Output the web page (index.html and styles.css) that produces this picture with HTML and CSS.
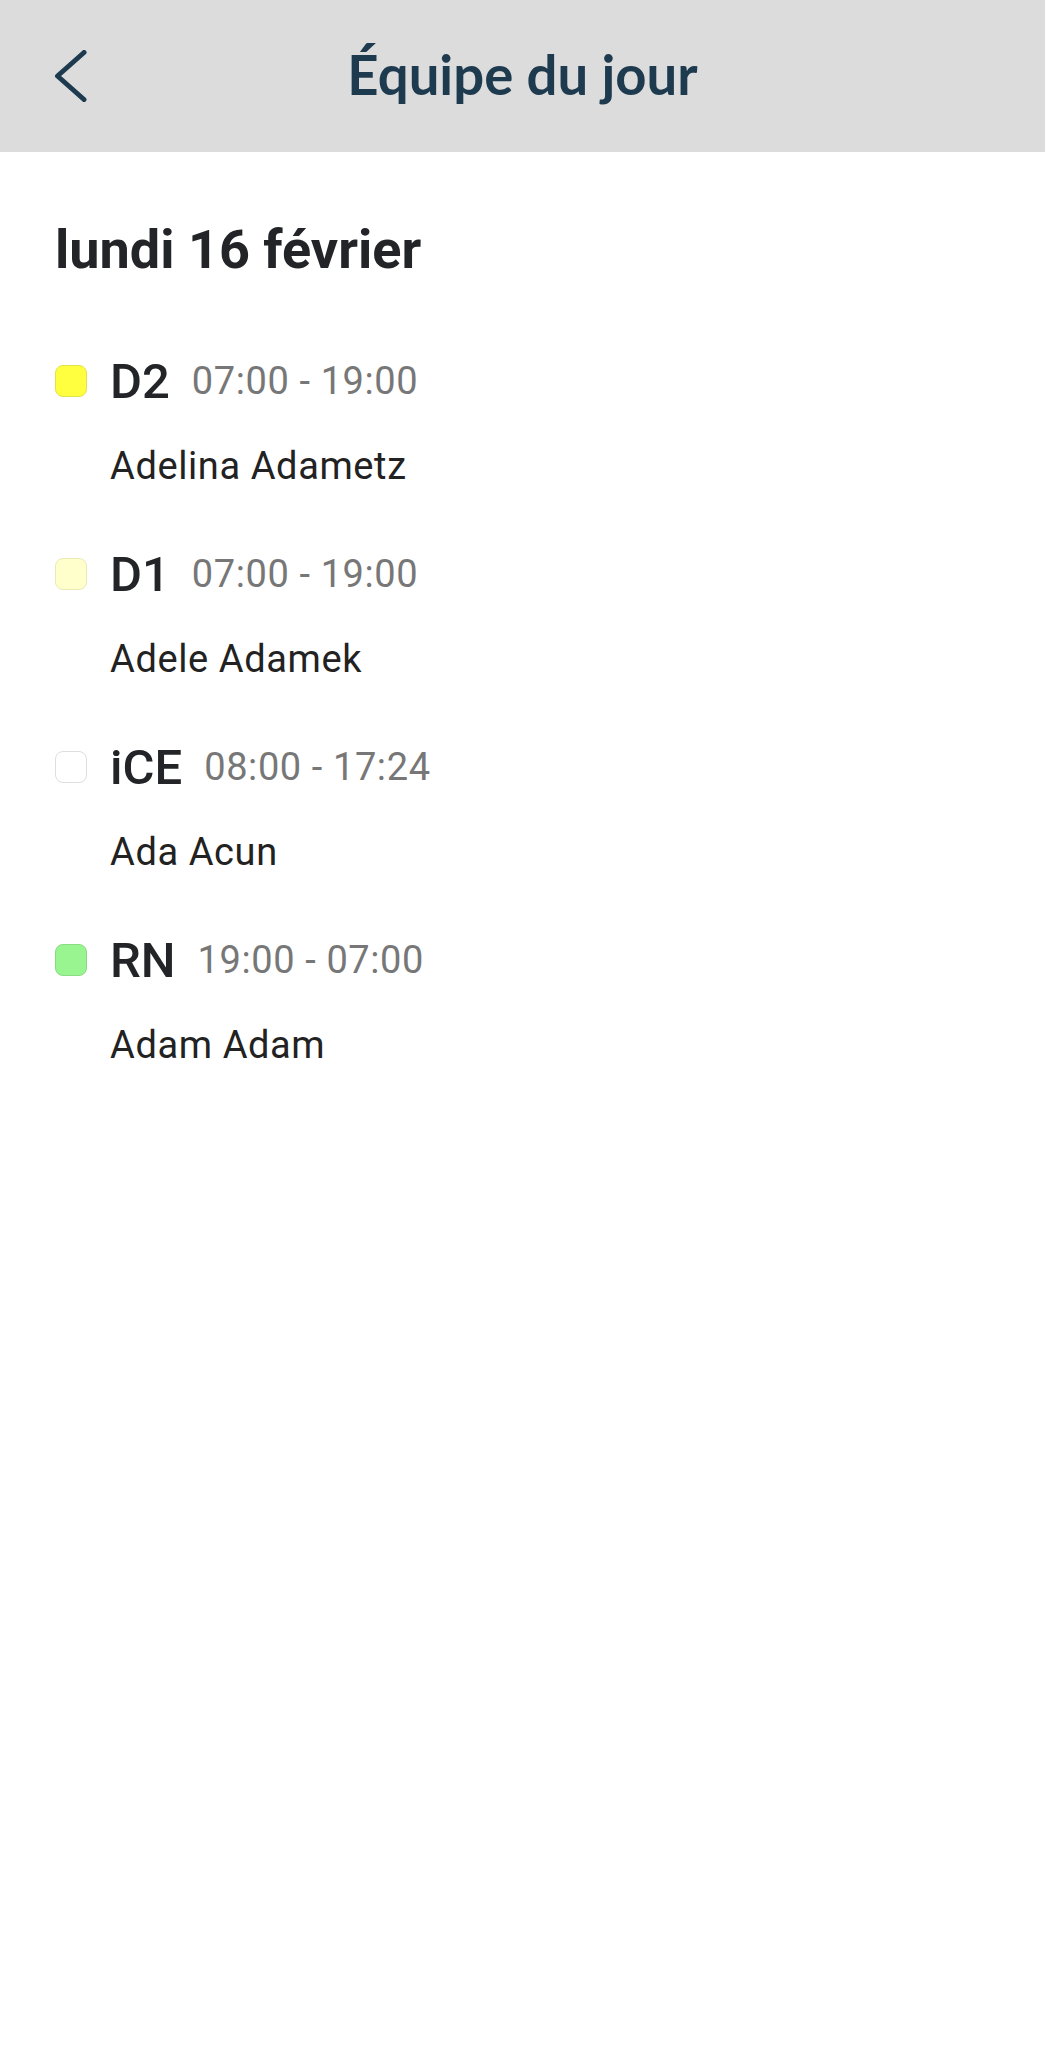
FILE: index.html
```html
<!DOCTYPE html>
<html lang="fr">
<head>
    <meta charset="UTF-8">
    <title>Équipe du jour</title>
    <link rel="stylesheet" href="styles.css">
</head>
<body>
    <header class="topbar">
        <a class="back" href="#" aria-label="Retour">
            <svg width="34" height="52" viewBox="0 0 34 52">
                <path d="M31 2.5 L4.5 26 L31 49.5" fill="none" stroke="#1e3a4f" stroke-width="5" stroke-linecap="round" stroke-linejoin="round"/>
            </svg>
        </a>
        <h1>Équipe du jour</h1>
        <span></span>
    </header>

    <main class="container">
        <h2 class="day">lundi 16 février</h2>

        <ul class="shifts">
            <li class="shift">
                <div class="shift-head">
                    <span class="dot dot-d2"></span>
                    <span class="code">D2</span>
                    <span class="hours">07:00 - 19:00</span>
                </div>
                <div class="name">Adelina Adametz</div>
            </li>
            <li class="shift">
                <div class="shift-head">
                    <span class="dot dot-d1"></span>
                    <span class="code">D1</span>
                    <span class="hours">07:00 - 19:00</span>
                </div>
                <div class="name">Adele Adamek</div>
            </li>
            <li class="shift">
                <div class="shift-head">
                    <span class="dot dot-ice"></span>
                    <span class="code">iCE</span>
                    <span class="hours">08:00 - 17:24</span>
                </div>
                <div class="name">Ada Acun</div>
            </li>
            <li class="shift">
                <div class="shift-head">
                    <span class="dot dot-rn"></span>
                    <span class="code">RN</span>
                    <span class="hours">19:00 - 07:00</span>
                </div>
                <div class="name">Adam Adam</div>
            </li>
        </ul>
    </main>
</body>
</html>
```

FILE: styles.css
```css
body {
    margin: 0;
    padding: 0;
    font-family: Roboto, "Liberation Sans", sans-serif;
    background-color: #fff;
    color: #222;
}

/* barre du haut */
.topbar {
    height: 152px;
    background-color: #dcdcdc;
    display: grid;
    grid-template-columns: 1fr auto 1fr;
    align-items: center;
    padding: 0 0 0 53px;
    box-sizing: border-box;
}

.back {
    display: flex;
    align-items: center;
    justify-self: start;
}

.topbar h1 {
    margin: 0 53px 4px 0;
    font-family: Lato, "Open Sans", sans-serif;
    font-weight: 700;
    font-size: 54.5px;
    color: #1e3a4f;
}

/* contenu */
.container {
    padding: 0 55px;
}

.day {
    margin: 66px 0 0 0;
    font-size: 54px;
    font-weight: 700;
    line-height: 64px;
    color: #222427;
}

.shifts {
    list-style-type: none;
    margin: 69px 0 0 0;
    padding: 0;
}

.shift {
    height: 193px;
}

.shift-head {
    display: flex;
    align-items: center;
    height: 60px;
}

.dot {
    width: 30px;
    height: 30px;
    border-radius: 8px;
    border: 1px solid #ddd;
    margin-right: 23px;
    flex-shrink: 0;
}

.dot-d2 {
    background-color: #ffff40;
    border-color: #e2e24a;
}

.dot-d1 {
    background-color: #ffffcc;
    border-color: #eaeab6;
}

.dot-ice {
    background-color: #fff;
    border-color: #dedede;
}

.dot-rn {
    background-color: #99f58f;
    border-color: #88dd80;
}

.code {
    font-size: 49px;
    font-weight: 500;
    color: #222427;
    margin-right: 22px;
}

.hours {
    font-size: 38px;
    color: #777;
    letter-spacing: 0.6px;
}

.name {
    margin: 33px 0 0 55px;
    font-size: 38px;
    line-height: 44px;
    letter-spacing: 0.6px;
    color: #222;
}
```
